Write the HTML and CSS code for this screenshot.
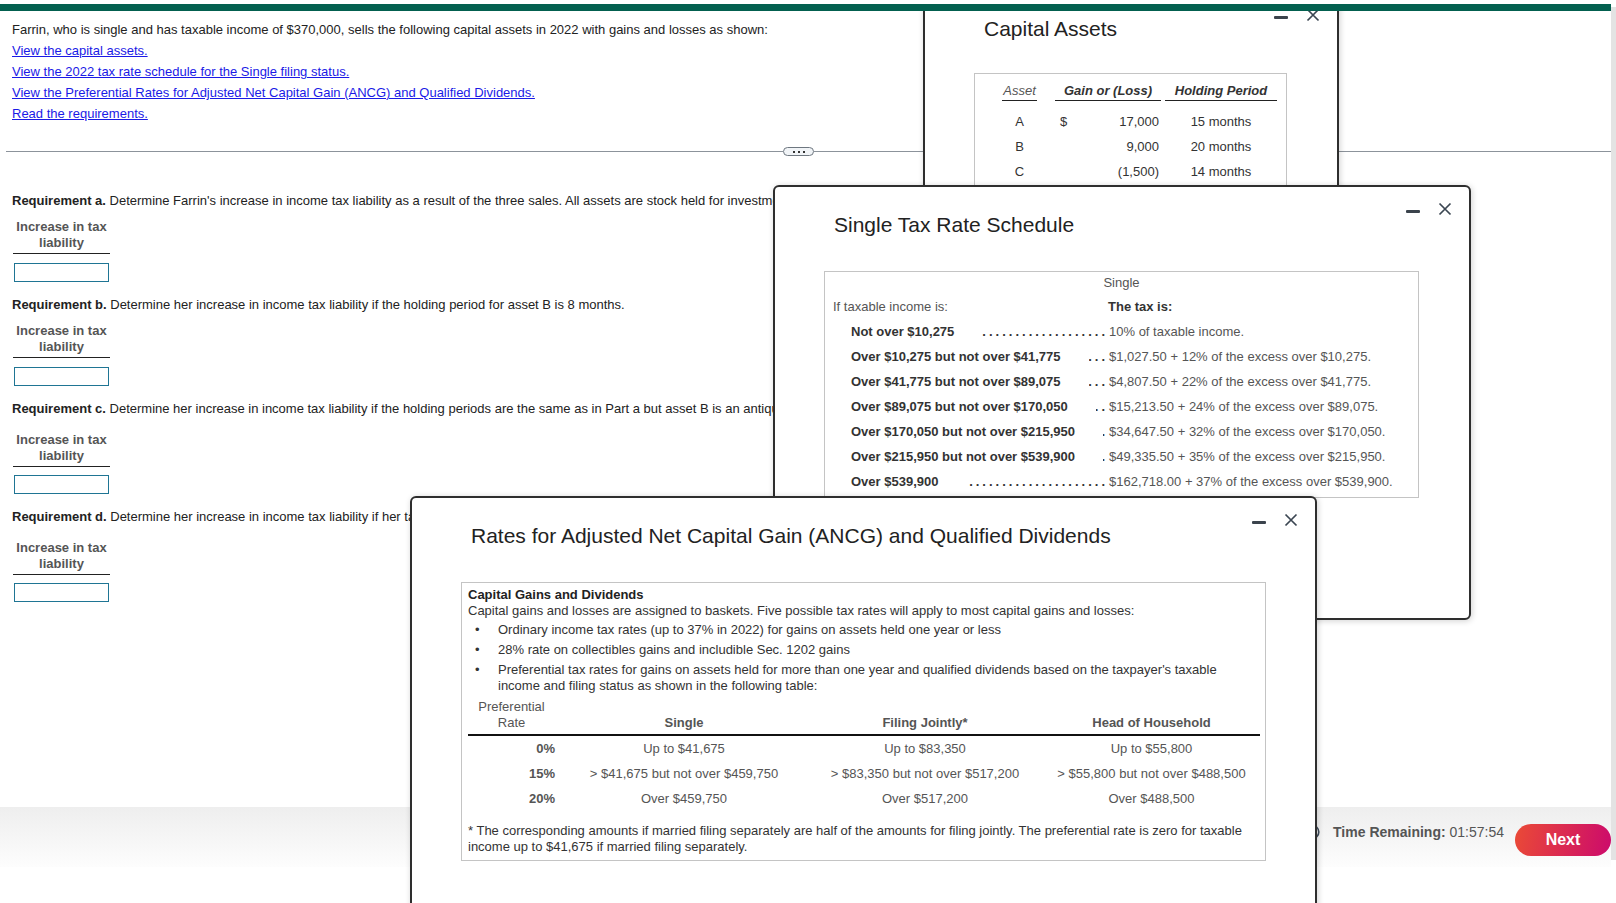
FILE: index.html
```html
<!DOCTYPE html>
<html lang="en">
<head>
    <meta charset="UTF-8">
    <title>Capital Gains Problem</title>
    <link rel="stylesheet" href="styles.css">
</head>
<body>
    <div class="page">
        <div class="main">
            <header class="topbar"></header>

            <section class="question">
                <p>Farrin, who is single and has taxable income of $370,000, sells the following capital assets in 2022 with gains and losses as shown:</p>
                <p><a href="#">View the capital assets.</a></p>
                <p><a href="#">View the 2022 tax rate schedule for the Single filing status.</a></p>
                <p><a href="#">View the Preferential Rates for Adjusted Net Capital Gain (ANCG) and Qualified Dividends.</a></p>
                <p><a href="#">Read the requirements.</a></p>
            </section>

            <div class="divider">
                <span class="line left"></span>
                <span class="more"><i></i><i></i><i></i></span>
                <span class="line right"></span>
            </div>

            <section class="reqs">
                <p class="req-text"><b>Requirement a.</b> Determine Farrin's increase in income tax liability as a result of the three sales. All assets are stock held for investment.</p>
                <div class="answer">
                    <div class="answer-head">Increase in tax<br>liability</div>
                    <input type="text">
                </div>

                <p class="req-text"><b>Requirement b.</b> Determine her increase in income tax liability if the holding period for asset B is 8 months.</p>
                <div class="answer">
                    <div class="answer-head">Increase in tax<br>liability</div>
                    <input type="text">
                </div>

                <p class="req-text"><b>Requirement c.</b> Determine her increase in income tax liability if the holding periods are the same as in Part a but asset B is an antique.</p>
                <div class="answer wide">
                    <div class="answer-head">Increase in tax<br>liability</div>
                    <input type="text">
                </div>

                <p class="req-text"><b>Requirement d.</b> Determine her increase in income tax liability if her taxable income is $45,000 instead of $370,000.</p>
                <div class="answer wide">
                    <div class="answer-head">Increase in tax<br>liability</div>
                    <input type="text">
                </div>
            </section>

            <footer class="footer">
                <div class="timer">
                    <svg class="clock" width="16" height="16" viewBox="0 0 16 16">
                        <circle cx="8" cy="8" r="6.8" fill="none" stroke="#3c4a5a" stroke-width="1.6"/>
                        <path d="M8 4.5V8.3L10.3 9.8" fill="none" stroke="#3c4a5a" stroke-width="1.5"/>
                    </svg>
                    <span><b>Time Remaining:</b> 01:57:54</span>
                </div>
                <button class="next">Next</button>
            </footer>
        </div>
        <div class="scrolltrack"></div>
    </div>

    <!-- Capital Assets window -->
    <div class="window win-assets">
        <div class="win-controls">
            <span class="win-min"></span>
            <svg class="win-close" width="14" height="14" viewBox="0 0 14 14"><path d="M1.5 1.5L12.5 12.5M12.5 1.5L1.5 12.5" stroke="#3b4652" stroke-width="1.7"/></svg>
        </div>
        <h3 class="win-title">Capital Assets</h3>
        <div class="box assets-box">
            <div class="assets-grid">
                <div class="ah asset">Asset</div><div></div><div class="ah strong">Gain or (Loss)</div><div class="ah strong">Holding Period</div>

                <div class="letter">A</div><div></div><div class="amount"><span>$</span><span>17,000</span></div><div class="months">15 months</div>
                <div class="letter">B</div><div></div><div class="amount"><span></span><span>9,000</span></div><div class="months">20 months</div>
                <div class="letter">C</div><div></div><div class="amount"><span></span><span>(1,500)</span></div><div class="months">14 months</div>
            </div>
        </div>
    </div>

    <!-- Tax rate schedule window -->
    <div class="window win-schedule">
        <div class="win-controls">
            <span class="win-min"></span>
            <svg class="win-close" width="14" height="14" viewBox="0 0 14 14"><path d="M1.5 1.5L12.5 12.5M12.5 1.5L1.5 12.5" stroke="#3b4652" stroke-width="1.7"/></svg>
        </div>
        <h3 class="win-title">Single Tax Rate Schedule</h3>
        <div class="box sched-box">
            <div class="sched-single">Single</div>
            <div class="sched-grid">
                <div class="hd">If taxable income is:</div>
                <div class="hd tax-is">The tax is:</div>

                <div class="label">Not over $10,275<span class="dots"></span></div>
                <div class="value">10% of taxable income.</div>
                <div class="label">Over $10,275 but not over $41,775<span class="dots"></span></div>
                <div class="value">$1,027.50 + 12% of the excess over $10,275.</div>
                <div class="label">Over $41,775 but not over $89,075<span class="dots"></span></div>
                <div class="value">$4,807.50 + 22% of the excess over $41,775.</div>
                <div class="label">Over $89,075 but not over $170,050<span class="dots"></span></div>
                <div class="value">$15,213.50 + 24% of the excess over $89,075.</div>
                <div class="label">Over $170,050 but not over $215,950<span class="dots"></span></div>
                <div class="value">$34,647.50 + 32% of the excess over $170,050.</div>
                <div class="label">Over $215,950 but not over $539,900<span class="dots"></span></div>
                <div class="value">$49,335.50 + 35% of the excess over $215,950.</div>
                <div class="label">Over $539,900<span class="dots"></span></div>
                <div class="value">$162,718.00 + 37% of the excess over $539,900.</div>
            </div>
        </div>
    </div>

    <!-- ANCG window -->
    <div class="window win-ancg">
        <div class="win-controls">
            <span class="win-min"></span>
            <svg class="win-close" width="14" height="14" viewBox="0 0 14 14"><path d="M1.5 1.5L12.5 12.5M12.5 1.5L1.5 12.5" stroke="#3b4652" stroke-width="1.7"/></svg>
        </div>
        <h3 class="win-title">Rates for Adjusted Net Capital Gain (ANCG) and Qualified Dividends</h3>
        <div class="box ancg-box">
            <h4>Capital Gains and Dividends</h4>
            <p>Capital gains and losses are assigned to baskets. Five possible tax rates will apply to most capital gains and losses:</p>
            <ul class="ancg-list">
                <li><span class="bullet">•</span><span>Ordinary income tax rates (up to 37% in 2022) for gains on assets held one year or less</span></li>
                <li><span class="bullet">•</span><span>28% rate on collectibles gains and includible Sec. 1202 gains</span></li>
                <li><span class="bullet">•</span><span>Preferential tax rates for gains on assets held for more than one year and qualified dividends based on the taxpayer's taxable income and filing status as shown in the following table:</span></li>
            </ul>
            <table class="rates">
                <thead>
                    <tr>
                        <th class="rate">Preferential<br>Rate</th>
                        <th class="c-single">Single</th>
                        <th class="c-joint">Filing Jointly*</th>
                        <th class="c-hoh">Head of Household</th>
                    </tr>
                </thead>
                <tbody>
                    <tr>
                        <td class="rate">0%</td>
                        <td>Up to $41,675</td>
                        <td>Up to $83,350</td>
                        <td>Up to $55,800</td>
                    </tr>
                    <tr>
                        <td class="rate">15%</td>
                        <td>&gt; $41,675 but not over $459,750</td>
                        <td>&gt; $83,350 but not over $517,200</td>
                        <td>&gt; $55,800 but not over $488,500</td>
                    </tr>
                    <tr>
                        <td class="rate">20%</td>
                        <td>Over $459,750</td>
                        <td>Over $517,200</td>
                        <td>Over $488,500</td>
                    </tr>
                </tbody>
            </table>
            <p class="footnote">* The corresponding amounts if married filing separately are half of the amounts for filing jointly. The preferential rate is zero for taxable income up to $41,675 if married filing separately.</p>
        </div>
    </div>
</body>
</html>
```

FILE: styles.css
```css
html, body {
    margin: 0;
    height: 903px;
    overflow: hidden;
}
body {
    font-family: "Liberation Sans", Arial, sans-serif;
    font-size: 13px;
    color: #222;
    background: #fff;
}
.page {
    display: flex;
    height: 903px;
}
.main {
    flex: 1;
    display: flex;
    flex-direction: column;
    min-width: 0;
}
.scrolltrack {
    width: 5px;
    background: #e3e3e3;
    margin: 7px 0 43px;
}
.topbar {
    height: 7px;
    border-top: 4px solid #fff;
    background: #03604f;
    position: relative;
    z-index: 10;
}

/* question */
.question {
    padding: 8px 12px 0;
}
.question p {
    margin: 0;
    line-height: 21px;
}
.question a {
    color: #1a1ae6;
    text-decoration: underline;
}
.divider {
    display: flex;
    align-items: center;
    margin: 23px 0 0 6px;
}
.divider .line {
    height: 1px;
    background: #8c939b;
}
.divider .line.left {
    width: 777px;
}
.divider .line.right {
    flex: 1;
}
.more {
    width: 31px;
    height: 9px;
    box-sizing: border-box;
    border: 1px solid #6e7780;
    border-radius: 5px;
    background: #f1f4f7;
    display: flex;
    align-items: center;
    justify-content: center;
    gap: 3px;
}
.more i {
    width: 2px;
    height: 2px;
    background: #333;
}

/* requirements */
.reqs {
    padding: 37px 12px 0;
}
.req-text {
    margin: 0;
    line-height: 16px;
    white-space: nowrap;
}
.answer {
    width: 97px;
    margin: 10px 0 15px 1px;
}
.answer.wide {
    margin-top: 15px;
}
.answer-head {
    font-weight: bold;
    color: #555;
    text-align: center;
    line-height: 16px;
    padding-bottom: 2px;
    border-bottom: 1px solid #222;
}
.answer input {
    display: block;
    box-sizing: border-box;
    width: 95px;
    height: 19px;
    margin: 9px 0 0 1px;
    padding: 0;
    border: 1px solid #1f7594;
}
.answer.wide input {
    margin-top: 8px;
}

/* footer */
.footer {
    margin-top: auto;
    margin-bottom: 36px;
    height: 60px;
    box-sizing: border-box;
    padding-top: 17px;
    background: linear-gradient(#eeeeee, #fdfdfd);
    display: flex;
    justify-content: flex-end;
    align-items: flex-start;
    gap: 11px;
}
.timer {
    display: flex;
    align-items: center;
    gap: 13px;
    font-size: 14px;
    line-height: 16px;
    color: #555;
}
.next {
    width: 96px;
    height: 32px;
    border: 0;
    border-radius: 16px;
    background: linear-gradient(100deg, #ea4a36, #cc0a6c);
    color: #fff;
    font-family: "Liberation Sans", Arial, sans-serif;
    font-size: 16px;
    font-weight: bold;
    cursor: pointer;
}

/* popup windows */
.window {
    position: absolute;
    box-sizing: border-box;
    background: #fff;
    border: 2px solid #2e2e2e;
    border-radius: 6px;
    padding: 24px 0 0 49px;
    box-shadow: 1px 1px 6px rgba(0, 0, 0, 0.18);
}
.win-assets {
    left: 923px;
    top: -11px;
    width: 416px;
    height: 260px;
    z-index: 1;
}
.win-schedule {
    left: 773px;
    top: 185px;
    width: 698px;
    height: 435px;
    z-index: 2;
}
.win-ancg {
    left: 410px;
    top: 496px;
    width: 907px;
    height: 450px;
    z-index: 3;
}
.win-title {
    margin: 0 0 32px 10px;
    font-size: 21px;
    line-height: 28px;
    font-weight: normal;
    color: #222;
}
.win-assets .win-title {
    margin-bottom: 30px;
}
.win-controls {
    position: absolute;
    top: 15px;
    right: 17px;
    display: flex;
    align-items: center;
    gap: 18px;
}
.win-assets .win-controls {
    top: 17px;
}
.win-min {
    width: 14px;
    height: 3px;
    margin-top: 4px;
    background: #3b434c;
    border-radius: 1px;
}
.box {
    border: 1px solid #c4c4c4;
    box-sizing: border-box;
}

/* capital assets table */
.assets-box {
    width: 313px;
    padding: 9px 0 40px 27px;
    color: #333;
}
.assets-grid {
    display: grid;
    grid-template-columns: 35px 10px 106px 112px;
    column-gap: 4px;
    line-height: 25px;
}
.assets-grid .ah {
    font-style: italic;
    line-height: 16px;
    text-align: center;
    padding-bottom: 1px;
    border-bottom: 1px solid #222;
    margin-bottom: 8px;
}
.assets-grid .asset {
    color: #555;
}
.assets-grid .strong {
    font-weight: bold;
    color: #333;
}
.letter, .months {
    text-align: center;
}
.amount {
    display: flex;
    justify-content: space-between;
    padding: 0 2px 0 5px;
}

/* tax schedule */
.sched-box {
    width: 595px;
    padding: 3px 0 3.5px;
    color: #555;
}
.sched-single {
    text-align: center;
    line-height: 16px;
}
.sched-grid {
    display: grid;
    grid-template-columns: 275px 1fr;
    padding-left: 8px;
}
.sched-grid .hd {
    line-height: 16px;
    margin: 8px 0 3.5px;
}
.sched-grid .tax-is {
    font-weight: bold;
    color: #333;
}
.sched-grid .label {
    display: flex;
    padding-left: 18px;
    line-height: 25px;
    font-weight: bold;
    color: #333;
    white-space: nowrap;
}
.sched-grid .value {
    line-height: 25px;
    padding-left: 1px;
    white-space: nowrap;
}
.dots {
    flex: 1;
    margin-left: 28px;
    overflow: hidden;
    direction: rtl;
    letter-spacing: 3px;
    font-weight: bold;
}
.dots::before {
    content: "..............................................";
}

/* ANCG table */
.ancg-box {
    width: 805px;
    padding: 4px 6px 5px;
    color: #333;
    line-height: 16px;
}
.ancg-box h4 {
    margin: 0;
    font-size: 13px;
    color: #222;
}
.ancg-box p {
    margin: 0;
}
.ancg-list {
    list-style: none;
    margin: 3px 0 0;
    padding: 0;
}
.ancg-list li {
    display: flex;
    margin-bottom: 4px;
}
.ancg-list li:last-child {
    margin-bottom: 0;
}
.ancg-list .bullet {
    flex: none;
    width: 30px;
    padding-left: 7px;
    box-sizing: border-box;
}
.rates {
    width: 792px;
    margin-top: 5px;
    border-collapse: collapse;
    table-layout: fixed;
    color: #555;
}
.rates th {
    vertical-align: bottom;
    padding: 0 0 3px;
    border-bottom: 2px solid #111;
    line-height: 16px;
}
.rates th.rate {
    width: 87px;
    padding-right: 6px;
    font-weight: normal;
    text-align: center;
}
.rates .c-single {
    width: 246px;
}
.rates .c-joint {
    width: 236px;
}
.rates .c-hoh {
    width: 217px;
}
.rates td {
    padding: 0;
    line-height: 25px;
    text-align: center;
    white-space: nowrap;
}
.rates td.rate {
    text-align: right;
    padding-right: 6px;
    font-weight: bold;
}
.ancg-box .footnote {
    margin-top: 12px;
}
```
